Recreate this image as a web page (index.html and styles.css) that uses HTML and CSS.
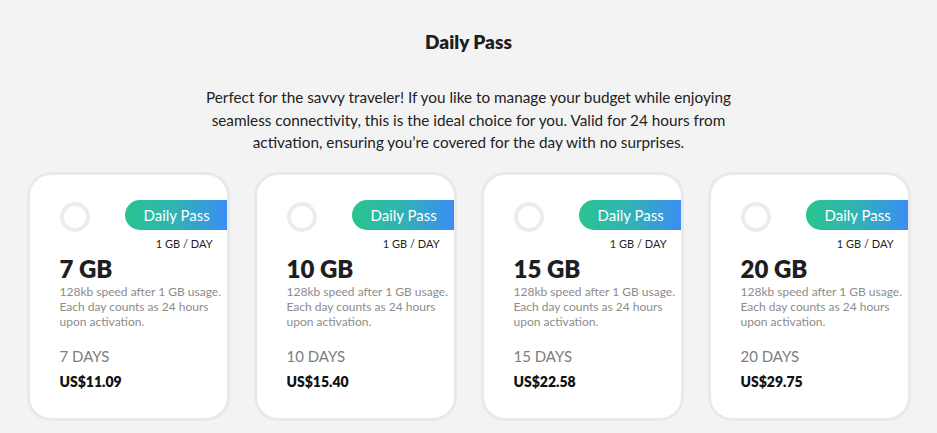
FILE: index.html
```html
<!DOCTYPE html>
<html>
<head>
<meta charset="utf-8">
<link rel="stylesheet" href="styles.css">
</head>
<body>
<section class="page">
  <h2 class="title">Daily Pass</h2>
  <p class="intro">Perfect for the savvy traveler! If you like to manage your budget while enjoying seamless connectivity, this is the ideal choice for you. Valid for 24 hours from activation, ensuring you’re covered for the day with no surprises.</p>
  <div class="cards">
    <div class="card">
      <div class="card-head"><span class="radio"></span><span class="badge">Daily Pass</span></div>
      <div class="per-day">1 GB / DAY</div>
      <div class="amount">7 GB</div>
      <p class="desc">128kb speed after 1 GB usage. Each day counts as 24 hours upon activation.</p>
      <div class="days">7 DAYS</div>
      <div class="price">US$11.09</div>
    </div>
    <div class="card">
      <div class="card-head"><span class="radio"></span><span class="badge">Daily Pass</span></div>
      <div class="per-day">1 GB / DAY</div>
      <div class="amount">10 GB</div>
      <p class="desc">128kb speed after 1 GB usage. Each day counts as 24 hours upon activation.</p>
      <div class="days">10 DAYS</div>
      <div class="price">US$15.40</div>
    </div>
    <div class="card">
      <div class="card-head"><span class="radio"></span><span class="badge">Daily Pass</span></div>
      <div class="per-day">1 GB / DAY</div>
      <div class="amount">15 GB</div>
      <p class="desc">128kb speed after 1 GB usage. Each day counts as 24 hours upon activation.</p>
      <div class="days">15 DAYS</div>
      <div class="price">US$22.58</div>
    </div>
    <div class="card">
      <div class="card-head"><span class="radio"></span><span class="badge">Daily Pass</span></div>
      <div class="per-day">1 GB / DAY</div>
      <div class="amount">20 GB</div>
      <p class="desc">128kb speed after 1 GB usage. Each day counts as 24 hours upon activation.</p>
      <div class="days">20 DAYS</div>
      <div class="price">US$29.75</div>
    </div>
  </div>
</section>
</body>
</html>
```
FILE: styles.css
```css
* { box-sizing: border-box; }
html, body { margin: 0; padding: 0; }
body {
  background: #f3f3f3;
  font-family: Lato, "Noto Sans", sans-serif;
  color: #1f1f22;
  width: 937px;
  height: 433px;
  overflow: hidden;
}
.page {
  display: flex;
  flex-direction: column;
  align-items: center;
  padding-top: 30px;
}
.title {
  margin: 0;
  font-size: 19px;
  line-height: 24px;
  font-weight: 800;
  color: #1d1e22;
}
.intro {
  margin: 32px 0 0;
  width: 550px;
  text-align: center;
  font-size: 15.3px;
  line-height: 22.5px;
  color: #222;
}
.cards {
  display: flex;
  gap: 24px;
  margin-top: 18px;
}
.card {
  width: 203px;
  height: 249px;
  background: #fff;
  border: 3px solid #e9e9e9;
  border-radius: 24px;
  padding: 23px 0 0 30px;
}
.card-head {
  display: flex;
  justify-content: space-between;
  align-items: center;
}
.radio {
  width: 30px;
  height: 30px;
  border: 4px solid #ececec;
  border-radius: 50%;
  margin-top: 4px;
}
.badge {
  width: 102px;
  height: 30px;
  border-radius: 15px 0 0 15px;
  background: linear-gradient(90deg, #29c48f 0%, #31b2b4 50%, #3b8df3 100%);
  color: #fff;
  font-size: 15px;
  line-height: 30px;
  padding-left: 19px;
}
.per-day {
  text-align: right;
  padding-right: 14px;
  font-size: 11px;
  line-height: 14px;
  margin-top: 5px;
  color: #1f1f22;
}
.amount {
  font-size: 24px;
  font-weight: 800;
  line-height: 28px;
  margin-top: 4px;
  color: #1d1e22;
}
.desc {
  margin: 1px 0 0;
  padding-right: 4px;
  font-size: 12px;
  line-height: 15px;
  color: #8c8c8c;
}
.days {
  margin-top: 18px;
  font-size: 15px;
  line-height: 18px;
  color: #7d7d7d;
}
.price {
  margin-top: 8px;
  font-size: 14px;
  line-height: 18px;
  font-weight: 800;
  color: #111;
}
```
